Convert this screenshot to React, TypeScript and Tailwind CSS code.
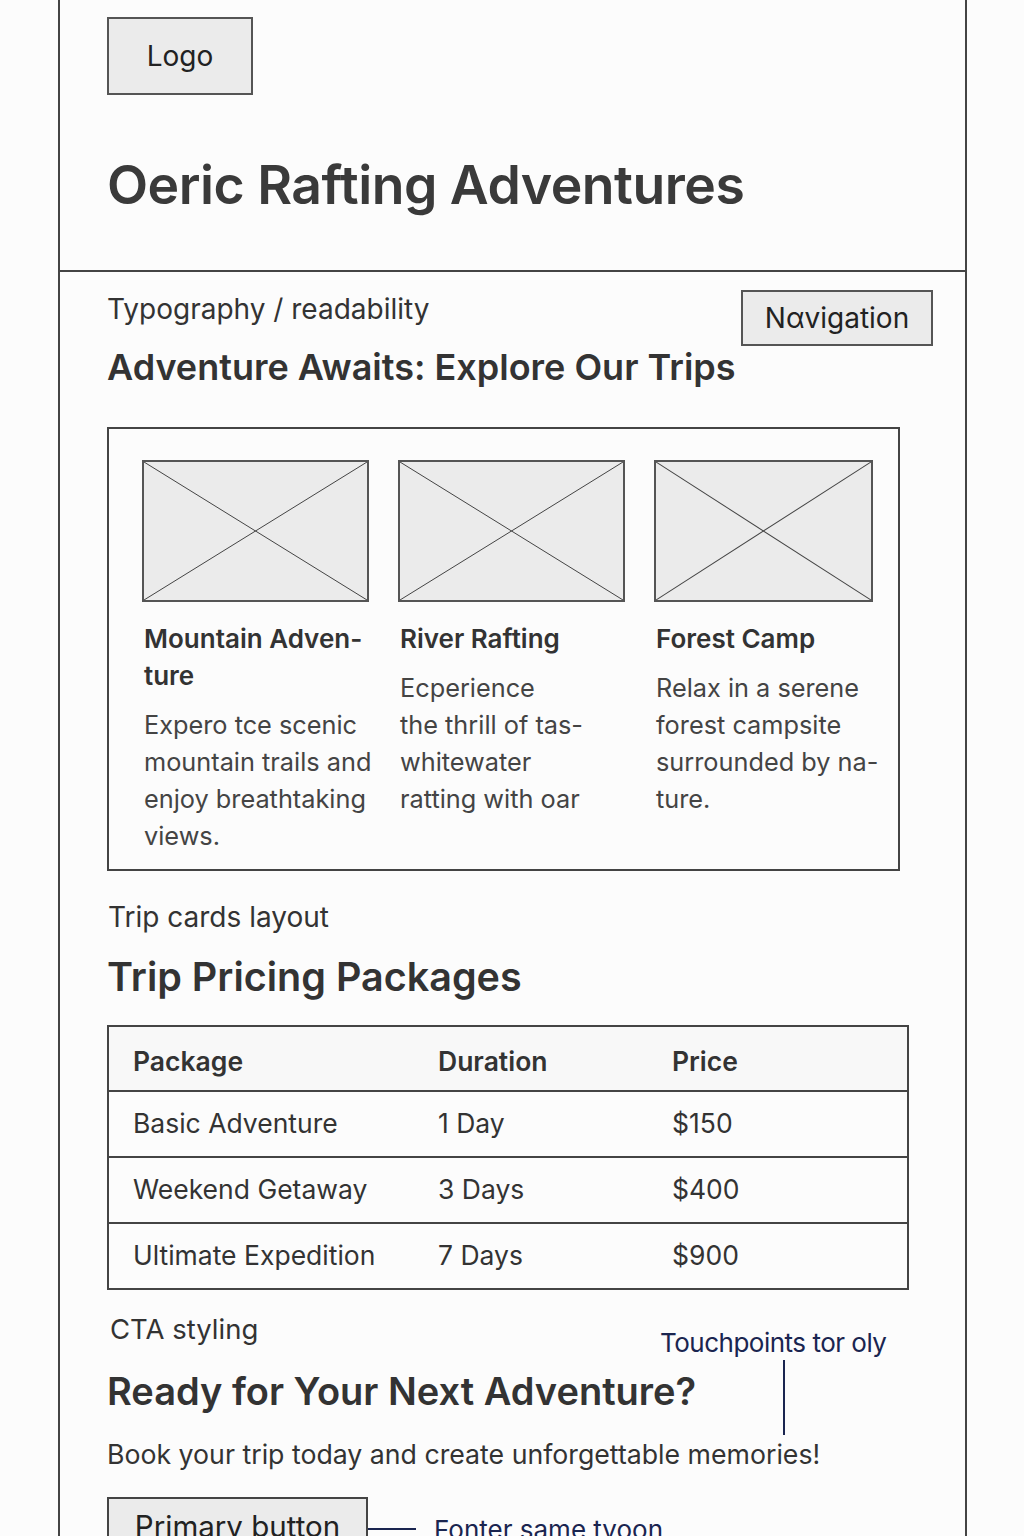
import React from "react";

const font = { fontFamily: "Inter, 'Noto Sans', sans-serif" };

function Placeholder() {
  return (
    <div className="h-[142px] w-full border-2 border-[#555] bg-[#ebebeb]">
      <svg className="h-full w-full" viewBox="0 0 100 100" preserveAspectRatio="none">
        <line x1="0" y1="0" x2="100" y2="100" stroke="#444" strokeWidth="1" vectorEffect="non-scaling-stroke" />
        <line x1="100" y1="0" x2="0" y2="100" stroke="#444" strokeWidth="1" vectorEffect="non-scaling-stroke" />
      </svg>
    </div>
  );
}

const cards = [
  { title: ["Mountain Adven-", "ture"], desc: ["Expero tce scenic", "mountain trails and", "enjoy breathtaking", "views."] },
  { title: ["River Rafting"], desc: ["Ecperience", "the thrill of tas-", "whitewater", "ratting with oar"] },
  { title: ["Forest Camp"], desc: ["Relax in a serene", "forest campsite", "surrounded by na-", "ture."] },
];

const rows = [
  ["Basic Adventure", "1 Day", "$150"],
  ["Weekend Getaway", "3 Days", "$400"],
  ["Ultimate Expedition", "7 Days", "$900"],
];

export default function App() {
  return (
    <div className="min-h-[1536px] w-full bg-[#fcfcfc] text-[#333]" style={font}>
      <div className="relative ml-[58px] h-[1536px] w-[909px] overflow-hidden border-x-2 border-[#444]">
        {/* Header */}
        <header className="h-[272px] border-b-2 border-[#444] pl-[47px] pt-[17px]">
          <div className="flex h-[78px] w-[146px] items-center justify-center border-2 border-[#555] bg-[#ebebeb] text-[28px] text-[#222]">
            Logo
          </div>
          <h1 className="mt-[58px] text-[53.5px] font-semibold leading-[64px] tracking-[-0.5px] text-[#3a3a3a]">
            Oeric Rafting Adventures
          </h1>
        </header>

        {/* Trips */}
        <section className="pl-[47px] pr-[32px]">
          <div className="flex items-start justify-between">
            <div className="pt-[19px]">
              <div className="text-[28px] leading-[36px]">Typography / readability</div>
              <h2 className="mt-[18px] text-[36px] font-semibold leading-[44px] text-[#333]">
                Adventure Awaits: Explore Our Trips
              </h2>
            </div>
            <div className="mt-[18px] flex h-[56px] w-[192px] items-center justify-center border-2 border-[#555] bg-[#ebebeb] text-[28px] text-[#222]">
              Nαvigation
            </div>
          </div>

          <div className="mt-[38px] h-[444px] w-[793px] border-2 border-[#444] pl-[33px] pt-[31px]">
            <div className="grid grid-cols-[227px_227px_219px] gap-x-[29px]">
              {cards.map((c, i) => (
                <div key={i}>
                  <Placeholder />
                  <div className="mt-[18px] pl-[2px] text-[26px] font-semibold leading-[37px] text-[#333] whitespace-nowrap">
                    {c.title.map((t, j) => (
                      <div key={j}>{t}</div>
                    ))}
                  </div>
                  <div className="mt-[12px] pl-[2px] text-[25.3px] leading-[37px] text-[#444] whitespace-nowrap">
                    {c.desc.map((t, j) => (
                      <div key={j}>{t}</div>
                    ))}
                  </div>
                </div>
              ))}
            </div>
          </div>

          <div className="mt-[28px] pl-[1px] text-[28px] leading-[36px]">Trip cards layout</div>
          <h2 className="mt-[18px] text-[39.5px] font-semibold leading-[48px] text-[#333]">Trip Pricing Packages</h2>

          <table className="mt-[24px] w-[802px] border-collapse border-2 border-[#444] text-[26.5px]">
            <thead>
              <tr className="h-[65px] bg-[#f8f8f8]">
                <th className="w-[330px] pl-[24px] pt-[6px] text-left font-semibold">Package</th>
                <th className="w-[234px] pt-[6px] text-left font-semibold">Duration</th>
                <th className="pt-[6px] text-left font-semibold">Price</th>
              </tr>
            </thead>
            <tbody>
              {rows.map((r, i) => (
                <tr key={i} className="h-[66px] border-t-2 border-[#444]">
                  <td className="pl-[24px]">{r[0]}</td>
                  <td>{r[1]}</td>
                  <td>{r[2]}</td>
                </tr>
              ))}
            </tbody>
          </table>

          <div className="mt-[21px] pl-[3px] text-[27.5px] leading-[36px]">CTA styling</div>
          <h2 className="mt-[21px] text-[38px] font-semibold leading-[46px] text-[#333]">Ready for Your Next Adventure?</h2>
          <p className="mt-[22px] text-[26.7px] leading-[36px]">Book your trip today and create unforgettable memories!</p>

          <div className="mt-[25px] flex items-start">
            <div className="flex h-[64px] w-[261px] items-start justify-center border-2 border-[#444] bg-[#ebebeb] pt-[9px] text-[29.5px] leading-[36px] text-[#222]">
              Primary button
            </div>
            <div className="mt-[31px] h-[2px] w-[48px] bg-[#1a2550]" />
            <div className="ml-[18px] mt-[16px] text-[26px] leading-[34px] text-[#1a2550]">Fonter same tyoon</div>
          </div>
        </section>

        {/* annotation */}
        <div className="absolute left-[600px] top-[1326px] text-[26px] leading-[34px] text-[#1a2550] tracking-[-0.5px]">
          Touchpoints tor oly
        </div>
        <div className="absolute left-[723px] top-[1360px] h-[75px] w-[2px] bg-[#1a2550]" />
      </div>
    </div>
  );
}
